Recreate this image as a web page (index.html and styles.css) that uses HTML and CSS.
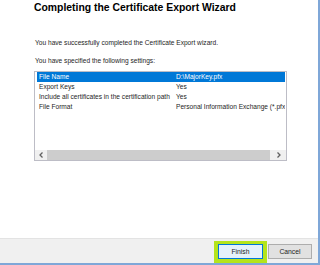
FILE: index.html
```html
<!DOCTYPE html>
<html>
<head>
<meta charset="utf-8">
<link rel="stylesheet" href="styles.css">
</head>
<body>
<div class="window">
  <div class="content">
    <h1 class="title">Completing the Certificate Export Wizard</h1>
    <p class="msg msg-first">You have successfully completed the Certificate Export wizard.</p>
    <p class="msg msg-second">You have specified the following settings:</p>
    <div class="listbox">
      <div class="rows">
        <div class="row selected"><span class="c1">File Name</span><span class="c2">D:\MajorKey.pfx</span></div>
        <div class="row"><span class="c1">Export Keys</span><span class="c2">Yes</span></div>
        <div class="row"><span class="c1">Include all certificates in the certification path</span><span class="c2">Yes</span></div>
        <div class="row"><span class="c1">File Format</span><span class="c2 clip">Personal Information Exchange (*.pfx)</span></div>
      </div>
      <div class="hscroll">
        <div class="arrow">
          <svg width="5" height="6" viewBox="0 0 5 6"><path d="M3.5 0.5 L1 3 L3.5 5.5" fill="none" stroke="#606060" stroke-width="1.3"/></svg>
        </div>
        <div class="thumb"></div>
        <div class="arrow arrow-right">
          <svg width="5" height="6" viewBox="0 0 5 6"><path d="M1.5 0.5 L4 3 L1.5 5.5" fill="none" stroke="#606060" stroke-width="1.3"/></svg>
        </div>
      </div>
    </div>
  </div>
  <div class="footer">
    <span class="highlight"><button class="btn btn-primary">Finish</button></span>
    <button class="btn btn-cancel">Cancel</button>
  </div>
</div>
</body>
</html>
```
FILE: styles.css
```css
html, body {
  margin: 0;
  padding: 0;
  background: #ffffff;
}
body {
  width: 320px;
  height: 265px;
  overflow: hidden;
  font-family: "Liberation Sans", Arial, sans-serif;
  color: #1e1e1e;
}
.window {
  box-sizing: border-box;
  width: 320px;
  height: 265px;
  border-right: 2px solid #7fa7d8;
  border-bottom: 2px solid #7fa7d8;
  display: flex;
  flex-direction: column;
  background: #ffffff;
}
.content {
  flex: 1;
  padding-left: 34px;
  padding-top: 2px;
}
.title {
  margin: 0;
  font-size: 10.4px;
  line-height: 12px;
  font-weight: bold;
  color: #000;
}
.msg {
  margin: 0;
  font-size: 6.6px;
  line-height: 9px;
  padding-left: 1px;
}
.msg-first {
  margin-top: 24px;
}
.msg-second {
  margin-top: 9px;
}
.listbox {
  box-sizing: border-box;
  margin-top: 6px;
  width: 253px;
  height: 90px;
  border: 1px solid #bdbdc6;
  display: flex;
  flex-direction: column;
  overflow: hidden;
}
.rows {
  flex: 1;
  padding: 0 1px 0 2px;
}
.row {
  display: flex;
  height: 10px;
  font-size: 6.6px;
  line-height: 10px;
  white-space: nowrap;
  overflow: hidden;
}
.row.selected {
  background: #0078d7;
  color: #ffffff;
}
.c1 {
  width: 137px;
  padding-left: 2px;
  overflow: hidden;
  flex: none;
}
.c2 {
  flex: none;
}
.c2.clip {
  flex: 1;
  min-width: 0;
  overflow: hidden;
}
.hscroll {
  height: 10px;
  display: flex;
  background: #f0f0f0;
}
.arrow {
  width: 12px;
  display: flex;
  align-items: center;
  justify-content: center;
}
.arrow-right {
  width: 16px;
}
.thumb {
  flex: 1;
  background: #cdcdcd;
}
.footer {
  height: 25px;
  box-sizing: border-box;
  background: #f0f0f0;
  border-top: 1px solid #e3e3e3;
  display: flex;
  justify-content: flex-end;
  align-items: flex-start;
  padding-top: 2px;
  padding-right: 6px;
}
.highlight {
  display: flex;
  border: 4px solid #b4e41c;
  border-top-width: 3px;
}
.btn {
  box-sizing: border-box;
  height: 15px;
  font-family: "Liberation Sans", Arial, sans-serif;
  font-size: 6.8px;
  padding: 0;
  color: #1e1e1e;
  margin: 0;
}
.btn-primary {
  width: 45px;
  background: #e5f1fb;
  border: 1px solid #0078d7;
}
.btn-cancel {
  width: 44px;
  margin-left: 1px;
  margin-top: 3px;
  background: #e1e1e1;
  border: 1px solid #adadad;
}
```
